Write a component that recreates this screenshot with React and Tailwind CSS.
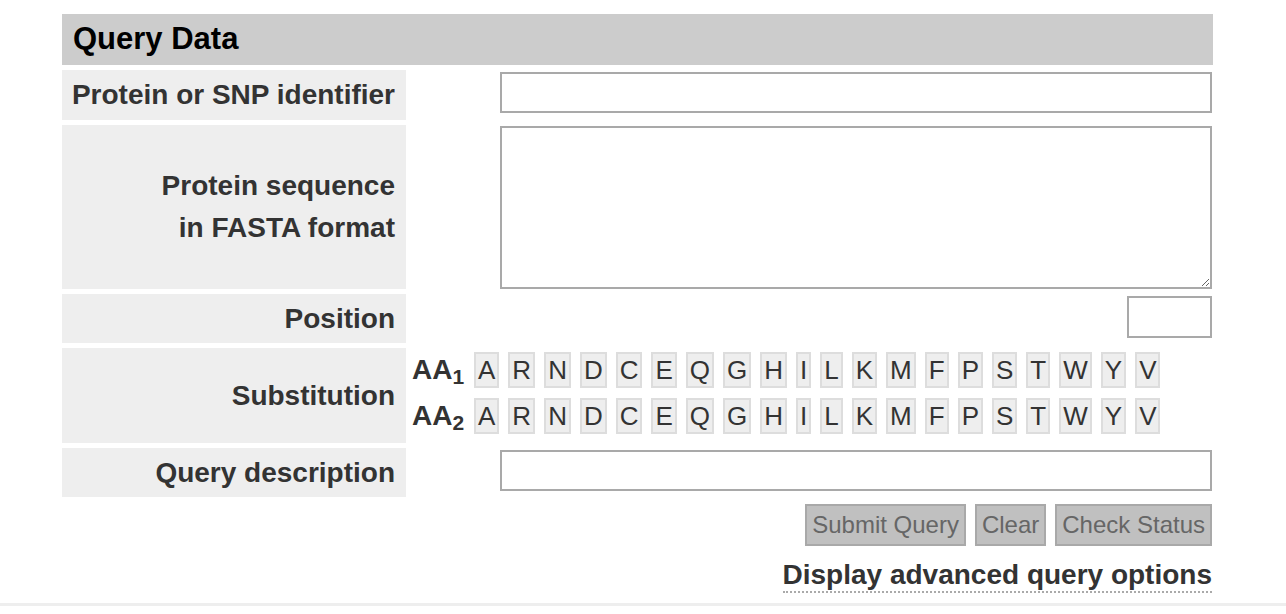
import React from "react";

const letters = ["A","R","N","D","C","E","Q","G","H","I","L","K","M","F","P","S","T","W","Y","V"];

function LetterRow({ n }) {
  return (
    <div className="flex items-center h-[36px]">
      <div className="w-[62px] shrink-0 font-bold text-[28px] leading-none text-[#333] flex items-baseline">
        <span>AA</span>
        <span className="text-[21px] relative top-[5px]">{n}</span>
      </div>
      <div className="flex gap-[9px]">
        {letters.map((l) => (
          <span
            key={l}
            className="h-[36px] px-[2px] border-2 border-[#dddddd] bg-[#eeeeee] text-[26px] text-[#333] flex items-center justify-center leading-none"
          >
            {l}
          </span>
        ))}
      </div>
    </div>
  );
}

function Label({ children, h }) {
  return (
    <div className={`w-[344px] shrink-0 bg-[#eeeeee] flex items-center justify-end pr-[11px] text-right font-bold text-[28px] leading-[42px] text-[#333] ${h}`}>
      {children}
    </div>
  );
}

export default function App() {
  return (
    <div className="w-[1286px] h-[614px] bg-white font-['Liberation_Sans',Arial,sans-serif] flex flex-col">
      <div className="ml-[62px] w-[1151px] pt-[14px] flex flex-col">
        <div className="h-[51px] bg-[#cccccc] flex items-center pl-[11px] text-[31px] font-bold text-black">
          Query Data
        </div>

        <div className="flex mt-[5px] h-[50px]">
          <Label h="h-[50px]">Protein or SNP identifier</Label>
          <div className="flex-1 flex justify-end items-start pt-[2px] pr-[1px]">
            <input className="w-[712px] h-[41px] border-2 border-[#a9a9a9] bg-white outline-none" />
          </div>
        </div>

        <div className="flex mt-[5px] h-[164px]">
          <Label h="h-[164px]">
            <span>Protein sequence<br />in FASTA format</span>
          </Label>
          <div className="flex-1 flex justify-end items-start pt-[1px] pr-[1px]">
            <textarea className="w-[712px] h-[163px] border-2 border-[#a9a9a9] bg-white outline-none block" />
          </div>
        </div>

        <div className="flex mt-[5px] h-[49px]">
          <Label h="h-[49px]">Position</Label>
          <div className="flex-1 flex justify-end items-start pt-[2px] pr-[1px]">
            <input className="w-[85px] h-[42px] border-2 border-[#a9a9a9] bg-white outline-none" />
          </div>
        </div>

        <div className="flex mt-[5px] h-[95px]">
          <Label h="h-[95px]">Substitution</Label>
          <div className="flex-1 flex flex-col gap-[10px] pl-[6px] pt-[4px]">
            <LetterRow n="1" />
            <LetterRow n="2" />
          </div>
        </div>

        <div className="flex mt-[5px] h-[49px]">
          <Label h="h-[49px]">Query description</Label>
          <div className="flex-1 flex justify-end items-start pt-[2px] pr-[1px]">
            <input className="w-[712px] h-[41px] border-2 border-[#a9a9a9] bg-white outline-none" />
          </div>
        </div>

        <div className="flex justify-end gap-[9px] mt-[7px] pr-[1px]">
          {["Submit Query", "Clear", "Check Status"].map((b) => (
            <button
              key={b}
              className="h-[42px] px-[5px] border-2 border-[#a9a9a9] bg-[#c0c0c0] text-[24px] text-[#666] leading-none"
            >
              {b}
            </button>
          ))}
        </div>

        <div className="flex justify-end pr-[1px] mt-[13px]">
          <span className="font-bold text-[28px] leading-[32px] text-[#333] border-b-2 border-dotted border-[#aaaaaa]">
            Display advanced query options
          </span>
        </div>
      </div>
      <div className="mt-[10px] h-[3px] bg-[#eeeeee] w-full" />
    </div>
  );
}
